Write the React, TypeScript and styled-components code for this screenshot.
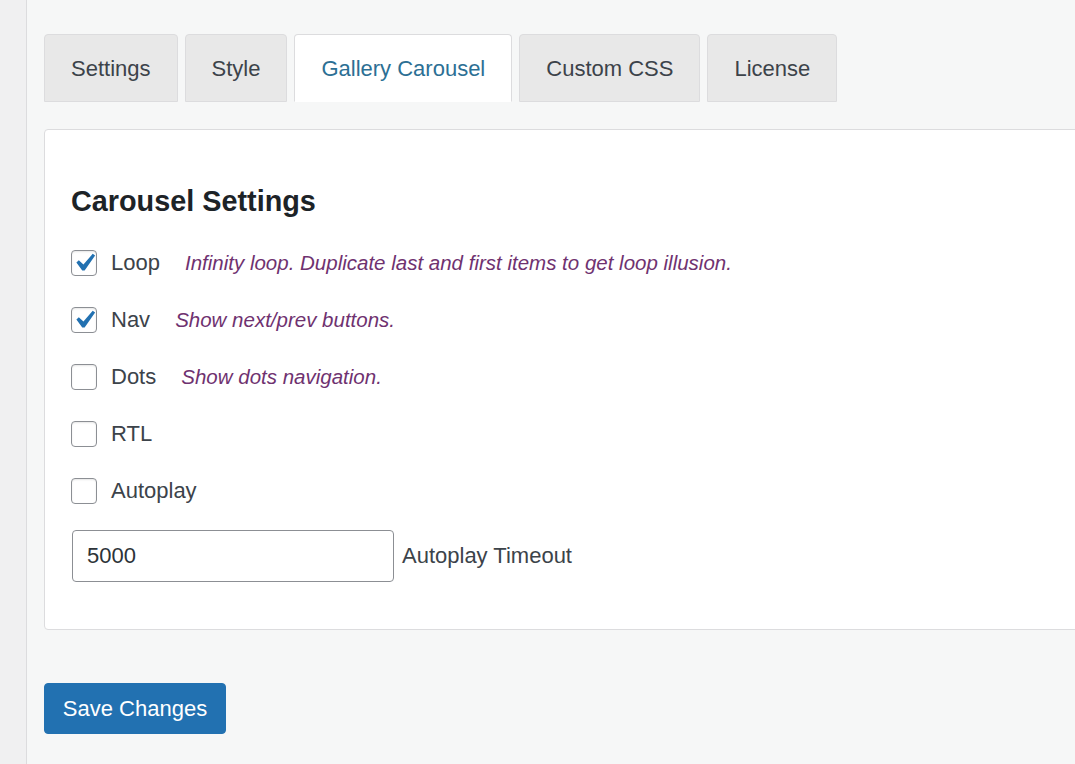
import React, { useState } from "react";
import styled, { createGlobalStyle } from "styled-components";

const GlobalStyle = createGlobalStyle`
  html, body {
    margin: 0;
    padding: 0;
    background: #f6f7f7;
    font-family: "Liberation Sans", Arial, sans-serif;
    color: #3c434a;
  }
  * { box-sizing: border-box; }
`;

const Page = styled.div`
  display: flex;
  min-height: 764px;
  background: #f6f7f7;
`;

const SideStrip = styled.div`
  width: 27px;
  flex-shrink: 0;
  background: #f0f0f1;
  border-right: 1px solid #dcdcde;
`;

const Content = styled.main`
  flex: 1;
  min-width: 0;
  padding: 34px 0 0 17px;
`;

const TabBar = styled.nav`
  display: flex;
  gap: 7px;
`;

const Tab = styled.button<{ $active?: boolean }>`
  height: 68px;
  padding: 2px 26px 0;
  font-family: inherit;
  font-size: 22px;
  line-height: 1;
  border: 1px solid #dcdcde;
  border-bottom: ${(p) => (p.$active ? "1px solid #fff" : "1px solid #dcdcde")};
  border-radius: 4px 4px 0 0;
  background: ${(p) => (p.$active ? "#fff" : "#e8e8e8")};
  color: ${(p) => (p.$active ? "#2c6f94" : "#3c434a")};
  cursor: pointer;
`;

const Panel = styled.section`
  margin-top: 27px;
  height: 501px;
  margin-right: -4px;
  background: #fff;
  border: 1px solid #dcdcde;
  border-radius: 4px;
  padding: 57px 26px 0;
`;

const Heading = styled.h2`
  margin: 0 0 19px;
  font-size: 28.8px;
  font-weight: 700;
  line-height: 1;
  color: #1d2327;
`;

const OptionList = styled.div`
  display: flex;
  flex-direction: column;
`;

const OptionRow = styled.label`
  display: flex;
  align-items: center;
  height: 57px;
  cursor: pointer;
`;

const Box = styled.span<{ $checked: boolean }>`
  width: 26px;
  height: 26px;
  flex-shrink: 0;
  border: 1px solid #8c8f94;
  border-radius: 4px;
  background: #fff;
  display: flex;
  align-items: center;
  justify-content: center;
  margin-right: 14px;
  box-shadow: inset 0 1px 2px rgba(0, 0, 0, 0.1);

  svg {
    display: ${(p) => (p.$checked ? "block" : "none")};
  }
`;

const HiddenInput = styled.input`
  display: none;
`;

const OptionLabel = styled.span`
  font-size: 22px;
  color: #3c434a;
`;

const Description = styled.span`
  margin-left: 25px;
  font-size: 20.5px;
  font-style: italic;
  color: #6f3270;
`;

const FieldRow = styled.div`
  display: flex;
  align-items: center;
  margin-top: 10px;
  margin-left: 1px;
`;

const NumberInput = styled.input`
  width: 322px;
  height: 52px;
  padding: 0 14px;
  font-family: inherit;
  font-size: 22px;
  color: #2c3338;
  border: 1px solid #8c8f94;
  border-radius: 4px;
  outline: none;
`;

const FieldLabel = styled.span`
  margin-left: 8px;
  font-size: 22px;
  color: #3c434a;
`;

const SaveButton = styled.button`
  margin-top: 53px;
  width: 182px;
  height: 51px;
  font-family: inherit;
  font-size: 22px;
  color: #fff;
  background: #2271b1;
  border: 1px solid #2271b1;
  border-radius: 4px;
  cursor: pointer;
`;

const CheckMark = () => (
  <svg width="36" height="36" viewBox="0 0 20 20" style={{ margin: "-5px", flexShrink: 0 }}>
    <path fill="#2271b1" d="M14.83 4.89l1.34.94-5.81 8.38H9.02L5.78 9.67l1.34-1.25 2.57 2.4z" />
  </svg>
);

const tabs = ["Settings", "Style", "Gallery Carousel", "Custom CSS", "License"];

const initialOptions = [
  { key: "loop", label: "Loop", desc: "Infinity loop. Duplicate last and first items to get loop illusion.", checked: true },
  { key: "nav", label: "Nav", desc: "Show next/prev buttons.", checked: true },
  { key: "dots", label: "Dots", desc: "Show dots navigation.", checked: false },
  { key: "rtl", label: "RTL", desc: "", checked: false },
  { key: "autoplay", label: "Autoplay", desc: "", checked: false },
];

const App: React.FC = () => {
  const [activeTab, setActiveTab] = useState("Gallery Carousel");
  const [options, setOptions] = useState(initialOptions);
  const [timeout, setTimeoutValue] = useState("5000");

  const toggle = (key: string) => {
    setOptions(options.map((o) => (o.key === key ? { ...o, checked: !o.checked } : o)));
  };

  return (
    <>
      <GlobalStyle />
      <Page>
        <SideStrip />
        <Content>
          <TabBar>
            {tabs.map((t) => (
              <Tab key={t} $active={t === activeTab} onClick={() => setActiveTab(t)}>
                {t}
              </Tab>
            ))}
          </TabBar>

          <Panel>
            <Heading>Carousel Settings</Heading>
            <OptionList>
              {options.map((o) => (
                <OptionRow key={o.key}>
                  <HiddenInput type="checkbox" checked={o.checked} onChange={() => toggle(o.key)} />
                  <Box $checked={o.checked}>
                    <CheckMark />
                  </Box>
                  <OptionLabel>{o.label}</OptionLabel>
                  {o.desc && <Description>{o.desc}</Description>}
                </OptionRow>
              ))}
            </OptionList>
            <FieldRow>
              <NumberInput value={timeout} onChange={(e) => setTimeoutValue(e.target.value)} />
              <FieldLabel>Autoplay Timeout</FieldLabel>
            </FieldRow>
          </Panel>

          <SaveButton>Save Changes</SaveButton>
        </Content>
      </Page>
    </>
  );
};

export default App;
